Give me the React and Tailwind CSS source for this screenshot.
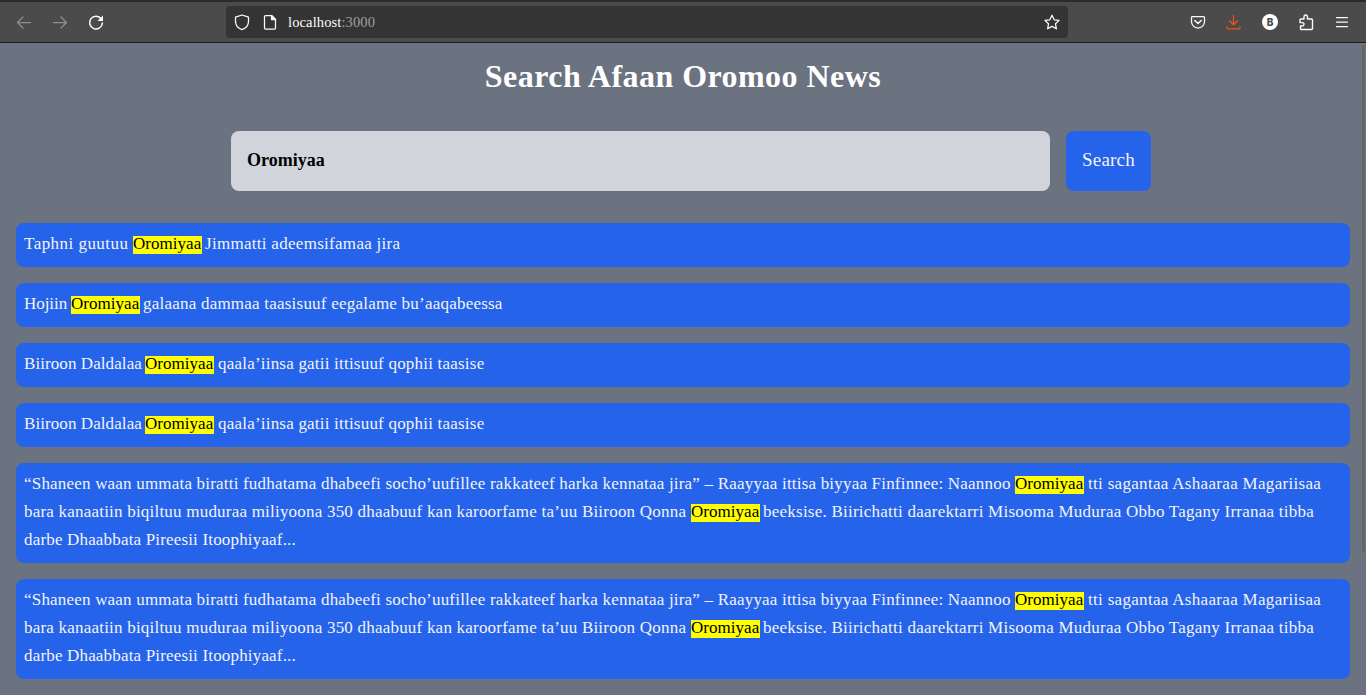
import React from "react";

const Mark = ({ children = "Oromiyaa" }) => (
  <mark className="inline-block h-[18px] w-[69px] bg-[#ffff00] align-baseline leading-4 tracking-[0.04px] text-black">
    {children}
  </mark>
);

const Card = ({ children }) => (
  <article className="rounded-lg bg-[#2563eb] px-2 pt-[7px] pb-[9px] text-[17px] leading-7 whitespace-nowrap text-[#f3f4f6]">
    {children}
  </article>
);

const LongStory = () => (
  <Card>
    <div className="flex h-7">
      <span className="w-[991px] tracking-[0.195px]">
        “Shaneen waan ummata biratti fudhatama dhabeefi socho’uufillee rakkateef harka kennataa jira” – Raayyaa ittisa biyyaa Finfinnee: Naannoo
      </span>
      <span className="w-[73px]"><Mark /></span>
      <span className="tracking-[0.31px]">tti sagantaa Ashaaraa Magariisaa</span>
    </div>
    <div className="flex h-7">
      <span className="w-[667px] tracking-[0.21px]">
        bara kanaatiin biqiltuu muduraa miliyoona 350 dhaabuuf kan karoorfame ta’uu Biiroon Qonna
      </span>
      <span className="w-[72px]"><Mark /></span>
      <span className="tracking-[0.235px]">
        beeksise. Biirichatti daarektarri Misooma Muduraa Obbo Tagany Irranaa tibba
      </span>
    </div>
    <div className="h-7 tracking-[0.17px]">darbe Dhaabbata Pireesii Itoophiyaaf...</div>
  </Card>
);

const Icon = ({ className, children }) => (
  <svg viewBox="0 -0.5 16 16" className={`size-4 shrink-0 overflow-visible ${className}`} fill="none" stroke="currentColor" strokeWidth="1.25" strokeLinecap="round" strokeLinejoin="round">
    {children}
  </svg>
);

const Toolbar = () => (
  <header className="flex h-[43px] items-center border-t-2 border-b border-t-[#2b2b2b] border-b-[#1c1b22] bg-[#4b4b4b] pr-4 pl-4 text-[#fbfbfe]">
    <div className="flex gap-5">
      <Icon className="text-[#8f8f8f]"><path d="M14.500 8H1.500M7 2.500 1.500 8 7 13.500" /></Icon>
      <Icon className="text-[#8f8f8f]"><path d="M1.500 8h13M9 2.500 14.500 8 9 13.500" /></Icon>
      <Icon className="">
        <path strokeWidth="1.5" d="M13.300 4.500A6.400 6.400 0 1 0 14.400 8.500" />
        <path fill="currentColor" stroke="none" d="M15 1v5.500H9.500z" />
      </Icon>
    </div>
    <div className="ml-[122px] flex h-8 w-[842px] items-center rounded bg-[#343434] px-2">
      <Icon className=""><path d="M8 .5 14.500 2.700v4c0 4-2.500 7-6.500 8.400C4 13.700 1.500 10.700 1.500 6.700v-4z" /></Icon>
      <Icon className="ml-3">
        <path d="M3.500 1h6l4 4v8.500a1 1 0 0 1-1 1h-9a1 1 0 0 1-1-1V2a1 1 0 0 1 1-1z" />
        <path fill="currentColor" d="M9.500 1v4h4z" />
      </Icon>
      <span className="ml-[10px] -mt-px text-[14.5px] leading-5 tracking-[0.12px]">
        localhost<span className="text-[#a0a0a0]">:3000</span>
      </span>
      <Icon className="ml-auto">
        <path d="m8 .7 2.200 4.600 4.900.6-3.600 3.400.9 5L8 11.900l-4.400 2.400.9-5L.9 5.900l4.900-.6z" />
      </Icon>
    </div>
    <div className="ml-auto flex items-center gap-5">
      <Icon className="">
        <path d="M2.500 2h11a1 1 0 0 1 1 1v4a6.500 6.500 0 0 1-13 0V3a1 1 0 0 1 1-1z" />
        <path strokeWidth="1.5" d="M4.800 6 8 9l3.200-3" />
      </Icon>
      <Icon className="-translate-x-[0.5px] text-[#e95420]">
        <path d="M8 .5v9.500M4 6.200l4 4 4-4M1.500 12v1.300a1 1 0 0 0 1 1h11a1 1 0 0 0 1-1V12" />
      </Icon>
      <span className="flex size-4 items-center justify-center rounded-full bg-white font-['Inter',sans-serif] text-[10px] leading-4 font-extrabold text-[#4b4b4b]">B</span>
      <Icon className="">
        <path strokeWidth="1.4" d="M3 4.500h3V2.200a1.700 1.700 0 0 1 3.400 0v2.300h4.100a1 1 0 0 1 1 1v8.500a1 1 0 0 1-1 1h-10a1 1 0 0 1-1-1v-2.500h1.800a1.700 1.700 0 0 0 0-3.400H2V5.500a1 1 0 0 1 1-1z" />
      </Icon>
      <Icon className=""><path d="M2.500 3h11M2.500 7.500h11M2.500 12h11" /></Icon>
    </div>
  </header>
);

export default function App() {
  return (
    <div className="relative h-[695px] w-[1366px] overflow-hidden bg-[#6b7280] font-['Liberation_Serif',serif]">
      <Toolbar />
      <main className="px-4">
        <h1 className="pt-[15px] text-center text-[32px] leading-9 font-bold tracking-[0.45px] text-white">
          Search Afaan Oromoo News
        </h1>
        <div className="mt-[37px] flex gap-4 pl-[215px]">
          <input
            aria-label="Search news"
            defaultValue="Oromiyaa"
            className="h-[60px] w-[819px] rounded-lg bg-[#d1d5db] px-4 pb-[2px] text-[18px] font-bold text-black outline-none"
          />
          <button className="h-[60px] w-[85px] rounded-lg bg-[#2563eb] pb-[2px] text-[19px] tracking-[0.2px] text-[#f3f4f6]">
            Search
          </button>
        </div>
        <section className="mt-8 flex flex-col gap-4">
          <Card>
            <div className="flex">
              <span className="w-[109px] tracking-[0.46px]">Taphni guutuu</span>
              <span className="w-[72px]"><Mark /></span>
              <span className="tracking-[0.29px]">Jimmatti adeemsifamaa jira</span>
            </div>
          </Card>
          <Card>
            <div className="flex">
              <span className="w-[47px] tracking-[-0.06px]">Hojiin</span>
              <span className="w-[72px]"><Mark /></span>
              <span className="tracking-[0.22px]">galaana dammaa taasisuuf eegalame bu’aaqabeessa</span>
            </div>
          </Card>
          {[0, 1].map((i) => (
            <Card key={i}>
              <div className="flex">
                <span className="w-[121px] tracking-[0.08px]">Biiroon Daldalaa</span>
                <span className="w-[73px]"><Mark /></span>
                <span className="tracking-[0.21px]">qaala’iinsa gatii ittisuuf qophii taasise</span>
              </div>
            </Card>
          ))}
          <LongStory />
          <LongStory />
        </section>
      </main>
      <div className="absolute top-[45px] right-[1px] h-[507px] w-[3px] rounded-full bg-[#666666]" />
    </div>
  );
}
